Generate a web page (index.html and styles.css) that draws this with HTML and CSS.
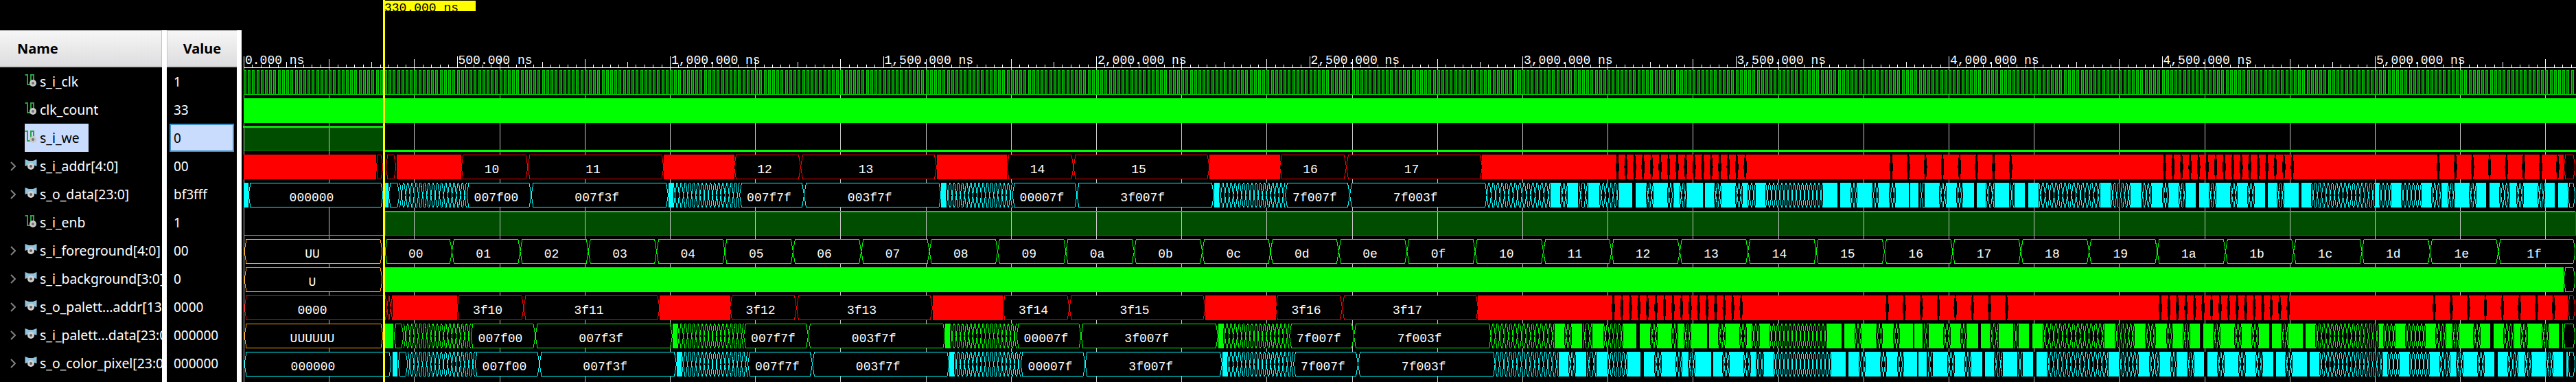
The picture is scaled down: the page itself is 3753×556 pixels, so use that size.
FILE: index.html
```html
<!DOCTYPE html>
<html lang="en">
    <head>
        <meta charset="UTF-8" />
        <title>Waveform</title>
        <link rel="stylesheet" href="styles.css">
    </head>
    <body>
        <svg class="defs" width="0" height="0">
            <symbol id="icon-wire" viewBox="0 0 18 18">
                <path d="M0.5 1H4V15H9V1H13V12" fill="none" stroke="#2f9e3f" stroke-width="2" />
                <circle cx="12" cy="13" r="5" fill="#c8c8c8" />
                <circle cx="12" cy="13" r="2" fill="#707070" />
            </symbol>
            <symbol id="icon-bus" viewBox="0 0 18 18">
                <path d="M0.5 1L6 3H12L17.5 1V11L12 9H6L0.5 11Z" fill="#8fc3de" />
                <circle cx="9" cy="11" r="5" fill="#d0d0d0" />
                <circle cx="9" cy="11" r="2" fill="#606060" />
            </symbol>
            <symbol id="icon-chevron" viewBox="0 0 8 14">
                <path d="M1 1L7 7L1 13" fill="none" stroke="#808080" stroke-width="2" />
            </symbol>
        </svg>
        <div class="window">
            <div class="signals">
                <div class="col col-name">
                    <div class="head head-name">Name</div>
                    <div class="row"><svg class="icon"><use href="#icon-wire" /></svg><span>s_i_clk</span></div>
                    <div class="row"><svg class="icon"><use href="#icon-wire" /></svg><span>clk_count</span></div>
                    <div class="row"><div class="sel-name"><svg class="icon"><use href="#icon-wire" /></svg><span>s_i_we</span></div></div>
                    <div class="row"><svg class="chev"><use href="#icon-chevron" /></svg><svg class="icon"><use href="#icon-bus" /></svg><span>s_i_addr[4:0]</span></div>
                    <div class="row"><svg class="chev"><use href="#icon-chevron" /></svg><svg class="icon"><use href="#icon-bus" /></svg><span>s_o_data[23:0]</span></div>
                    <div class="row"><svg class="icon"><use href="#icon-wire" /></svg><span>s_i_enb</span></div>
                    <div class="row"><svg class="chev"><use href="#icon-chevron" /></svg><svg class="icon"><use href="#icon-bus" /></svg><span>s_i_foreground[4:0]</span></div>
                    <div class="row"><svg class="chev"><use href="#icon-chevron" /></svg><svg class="icon"><use href="#icon-bus" /></svg><span>s_i_background[3:0]</span></div>
                    <div class="row"><svg class="chev"><use href="#icon-chevron" /></svg><svg class="icon"><use href="#icon-bus" /></svg><span>s_o_palett...addr[13</span></div>
                    <div class="row"><svg class="chev"><use href="#icon-chevron" /></svg><svg class="icon"><use href="#icon-bus" /></svg><span>s_i_palett...data[23:0</span></div>
                    <div class="row"><svg class="chev"><use href="#icon-chevron" /></svg><svg class="icon"><use href="#icon-bus" /></svg><span>s_o_color_pixel[23:0</span></div>
                </div>
                <div class="col col-value">
                    <div class="head head-value">Value</div>
                    <div class="val">1</div>
                    <div class="val">33</div>
                    <div class="val val-sel">0</div>
                    <div class="val">00</div>
                    <div class="val">bf3fff</div>
                    <div class="val">1</div>
                    <div class="val">00</div>
                    <div class="val">0</div>
                    <div class="val">0000</div>
                    <div class="val">000000</div>
                    <div class="val">000000</div>
                </div>
            </div>
            <svg id="wave" class="wave" viewBox="352 0 3401 556"></svg>
        </div>
        <script src="wave.js"></script>
    </body>
</html>
```

FILE: styles.css
```css
html,
body {
    margin: 0;
    padding: 0;
    background-color: #000;
    overflow: hidden;
}
.defs {
    display: block;
    height: 0;
}
.window {
    display: flex;
    width: 3753px;
    height: 556px;
    background-color: #000;
    font-family: "Noto Sans", "Open Sans", sans-serif;
    font-size: 19.4px;
    color: #fff;
}
.signals {
    flex: none;
    display: flex;
    gap: 7px;
    width: 345px;
    margin-top: 44px;
    border-right: 7px solid #fff;
    background-color: #fff;
}
.col {
    background-color: #000;
    overflow: hidden;
}
.col-name {
    width: 236px;
}
.col-value {
    width: 102px;
    font-size: 19px;
}
.head {
    box-sizing: border-box;
    height: 54px;
    display: flex;
    align-items: center;
    font-size: 20px;
    font-weight: bold;
    color: #000;
    background: linear-gradient(#f6f6f6, #dddddf);
    border-bottom: 2px solid #c4c4c4;
    border-top: 1px solid #c4c4c4;
}
.head-name {
    padding-left: 25px;
    border-right: 1px solid #c4c4c4;
}
.head-value {
    justify-content: center;
    border-left: 1px solid #c4c4c4;
}
.row {
    position: relative;
    display: flex;
    align-items: center;
    height: 41px;
    padding-left: 36px;
    white-space: nowrap;
}
.chev {
    position: absolute;
    left: 15px;
    top: 14px;
    width: 8px;
    height: 14px;
}
.icon {
    flex: none;
    width: 18px;
    height: 18px;
    margin-right: 4px;
    margin-top: -4px;
}
.sel-name {
    display: flex;
    align-items: center;
    height: 41px;
    width: 93px;
    background-color: #c9dcfd;
    color: #000;
}
.val {
    display: flex;
    align-items: center;
    height: 41px;
    padding-left: 10px;
}
.val-sel {
    box-sizing: border-box;
    width: 94px;
    margin-left: 4px;
    padding-left: 4px;
    border: 2px solid #3d8fcc;
    background-color: #c9dcfd;
    color: #000;
}
.wave {
    flex: 1;
    display: block;
    height: 556px;
    shape-rendering: crispEdges;
}
.wave text {
    font-family: "Liberation Mono", monospace;
    font-size: 18px;
    fill: #fff;
}
.wave .cursor-text {
    fill: #000;
}
```

FILE: wave.js
```js
// 0.621 px per ns, time 0 sits at x=355
const X0 = 355;
const PX_NS = 0.621;
const END = 3752;
const H = 36;

const GREEN = "#00ff00";
const RED = "#ff0000";
const CYAN = "#00ffff";
const ORANGE = "#ffa500";
const DARK = "#004d00";

const ROW = { clk: 102, count: 143, we: 184, addr: 225, data: 266, enb: 307, fg: 348, bg: 389, paddr: 430, pdata: 471, pixel: 512 };

// solid stretches of the data buses after 2,900 ns, measured off the capture
const RUNS = [
    [2259, 2273], [2284, 2299], [2314, 2330], [2359, 2378], [2383, 2398], [2409, 2429], [2439, 2447], [2458, 2481],
    [2484, 2497], [2508, 2528], [2539, 2546], [2558, 2572], [2656, 2677], [2681, 2696], [2706, 2727], [2737, 2752],
    [2762, 2781], [2783, 2795], [2804, 2825], [2836, 2850], [2860, 2876], [2880, 2893], [2906, 2927], [2935, 2950],
    [2955, 2970], [3060, 3075], [3104, 3119], [3135, 3150], [3160, 3174], [3185, 3199], [3204, 3218], [3229, 3249],
    [3260, 3274], [3285, 3300], [3304, 3317], [3328, 3349], [3353, 3367], [3460, 3466], [3484, 3498], [3528, 3542],
    [3558, 3566], [3577, 3597], [3608, 3622], [3627, 3641], [3657, 3666], [3677, 3697], [3708, 3722], [3727, 3741]
];

let out = "";

function rect(x, y, w, h, color) {
    out += `<rect x="${x}" y="${y}" width="${w}" height="${h}" fill="${color}" />`;
}

function fill(y, a, b, color) {
    rect(a, y, b - a, H, color);
}

function label(x, y, text) {
    out += `<text x="${x}" y="${y + 27}" text-anchor="middle">${text}</text>`;
}

function bus(y, a, b, color, text, tx) {
    const top = y + 0.5;
    const mid = y + H / 2;
    const bot = y + H - 0.5;
    out += `<polygon points="${a},${mid} ${a + 3},${top} ${b - 3},${top} ${b},${mid} ${b - 3},${bot} ${a + 3},${bot}" fill="#000" stroke="${color}" />`;
    if (text) {
        label(tx === undefined ? (a + b) / 2 - 4 : tx, y, text);
    }
}

// a run of fast transitions, one crossing per clock
function zig(y, a, b, color) {
    const w = b - a;
    if (w <= 0) return;
    if (w < 6) {
        const c = (a + b) / 2;
        const mid = y + H / 2;
        out += `<polygon points="${c - 1},${y} ${c + 1},${y} ${c + w / 2},${mid} ${c + 1},${y + H} ${c - 1},${y + H} ${c - w / 2},${mid}" fill="#000" />`;
        return;
    }
    rect(a, y, w, H, "#000");
    const n = Math.max(1, Math.round(w / 6.21));
    const step = w / n;
    const half = 2.4;
    const top = y + 0.5;
    const bot = y + H - 0.5;
    let d = "";
    for (let i = 0; i < n; i++) {
        const c = a + (i + 0.5) * step;
        d += `M${c - half} ${y}L${c + half} ${y + H}M${c - half} ${y + H}L${c + half} ${y}`;
        // short flats between the crossings
        d += `M${c + half} ${top}H${c + step - half}M${c + half} ${bot}H${c + step - half}`;
    }
    out += `<path d="${d}" fill="none" stroke="${color}" />`;
}

function grid() {
    for (let x = X0; x < 3753; x += 124.2) {
        rect(Math.round(x), 86, 1, 470, "#c8c8c8");
    }
}

function axis() {
    rect(X0, 98, 3753 - X0, 1, "#fff");
    for (let i = 0; X0 + i * 12.42 < 3753; i++) {
        const x = Math.round(X0 + i * 12.42);
        let h = 4;
        if (i % 25 === 0) h = 16;
        else if (i % 10 === 0) h = 12;
        else if (i % 5 === 0) h = 8;
        rect(x, 98 - h, 1, h, "#fff");
    }
    const names = ["0.000", "500.000", "1,000.000", "1,500.000", "2,000.000", "2,500.000", "3,000.000", "3,500.000", "4,000.000", "4,500.000", "5,000.000"];
    names.forEach((name, i) => {
        out += `<text x="${X0 + i * 500 * PX_NS + 2}" y="93">${name} ns</text>`;
    });
}

function clock(y) {
    const period = 10 * PX_NS;
    for (let x = X0; x < 3748; x += period) {
        out += `<rect x="${Math.round(x) + 0.5}" y="${y + 0.5}" width="3" height="${H - 1}" fill="#007a00" stroke="#00d000" />`;
    }
    rect(X0, y + H - 1, 3753 - X0, 1, "#00d000");
}

function levels() {
    // s_i_we high until the cursor, s_i_enb high after it
    out += `<rect x="355.5" y="${ROW.we + 1.5}" width="203" height="34" fill="${DARK}" stroke="#007000" />`;
    out += `<rect x="561" y="${ROW.enb + 1}" width="${END - 561}" height="34.5" fill="${DARK}" stroke="#008000" />`;
}

function levelLines() {
    rect(354, ROW.we - 1, 204, 3, "#10e010");
    rect(561, ROW.we + 34, 3753 - 561, 3, GREEN);
    rect(561, ROW.enb, END - 561, 2, "#10d010");
    rect(355, ROW.enb + 35, 203, 1, "#10e010");
}

function addrRow(y, shift, names, end) {
    for (let k = 0; k < 4; k++) {
        const base = 672 + 397.5 * k + shift;
        bus(y, base, base + 97, RED, names[2 * k]);
        bus(y, base + 97, base + 295, RED, names[2 * k + 1]);
        if (k < 3) fill(y, base + 295, base + 397.5, RED);
    }
    fill(y, 2159 + shift, end, RED);
    [[2354, 12.42, 16], [2753, 24.84, 8], [3151, 12.42, 16], [3550, 24.84, 8]].forEach(([start, step, n]) => {
        for (let i = 0; i < n; i++) {
            const x = start + shift + i * step;
            if (x + 5 < end) zig(y, x, x + 5, RED);
        }
    });
    bus(y, end, END, RED, "");
}

function dataRow(y, color, shift, hex) {
    const names = ["007f00", "007f3f", "007f7f", "003f7f", "00007f", "3f007f", "7f007f", "7f003f"];
    for (let k = 0; k < 4; k++) {
        const base = 680 + 397.5 * k + shift;
        bus(y, base, base + 94, color, names[2 * k]);
        bus(y, base + 94, base + 293.5, color, names[2 * k + 1]);
        if (k < 3) {
            fill(y, base + 293.5, base + 300.5, color);
            zig(y, base + 300.5, base + 397.5, color);
        }
    }
    let cur = 2163 + shift;
    for (const [a, b] of RUNS) {
        const from = a + shift;
        const to = Math.min(b + shift, hex);
        if (from >= hex) break;
        zig(y, cur, from, color);
        fill(y, from, to, color);
        cur = to;
    }
    zig(y, cur, hex, color);
    bus(y, hex, END, color, "");
}

function foreground(y) {
    for (let k = 0; k < 32; k++) {
        const a = k === 0 ? 561 : 559.1 + 99.38 * k;
        const b = k === 31 ? END : 559.1 + 99.38 * (k + 1);
        bus(y, a, b, GREEN, k.toString(16).padStart(2, "0"));
    }
}

function cursor() {
    rect(558, 0, 3, 556, "#ffff00");
    out += `<svg x="559" y="1" width="134" height="15"><rect width="134" height="15" fill="#ffff00" />`;
    out += `<text class="cursor-text" x="1" y="16">330.000 ns</text></svg>`;
}

levels();
grid();
axis();
clock(ROW.clk);
fill(ROW.count, X0, 3753, GREEN);
levelLines();

fill(ROW.addr, X0, 548, RED);
bus(ROW.addr, 548, 558, RED, "");
bus(ROW.addr, 562, 577, RED, "");
fill(ROW.addr, 578, 672, RED);
addrRow(ROW.addr, 0, ["10", "11", "12", "13", "14", "15", "16", "17"], 3735);

fill(ROW.data, X0, 362, CYAN);
bus(ROW.data, 362, 558, CYAN, "000000", 454);
fill(ROW.data, 561, 566, CYAN);
bus(ROW.data, 566, 582, CYAN, "");
zig(ROW.data, 582, 680, CYAN);
dataRow(ROW.data, CYAN, 0, 3741);

bus(ROW.fg, 356, 557, ORANGE, "UU", 455);
foreground(ROW.fg);

bus(ROW.bg, 356, 557, ORANGE, "U", 455);
fill(ROW.bg, 561, 3735, GREEN);
bus(ROW.bg, 3735, END, GREEN, "");

bus(ROW.paddr, 356, 561, RED, "0000", 455);
zig(ROW.paddr, 561, 572, RED);
fill(ROW.paddr, 572, 666, RED);
addrRow(ROW.paddr, -6, ["3f10", "3f11", "3f12", "3f13", "3f14", "3f15", "3f16", "3f17"], 3741);

bus(ROW.pdata, 356, 558, ORANGE, "UUUUUU", 455);
fill(ROW.pdata, 561, 573, GREEN);
bus(ROW.pdata, 574, 588, GREEN, "");
zig(ROW.pdata, 588, 686, GREEN);
dataRow(ROW.pdata, GREEN, 6, 3734);

bus(ROW.pixel, 356, 570, CYAN, "000000", 456);
fill(ROW.pixel, 572, 579, CYAN);
bus(ROW.pixel, 580, 594, CYAN, "");
zig(ROW.pixel, 594, 692, CYAN);
dataRow(ROW.pixel, CYAN, 12, 3741);

cursor();

document.getElementById("wave").innerHTML = out;
```
